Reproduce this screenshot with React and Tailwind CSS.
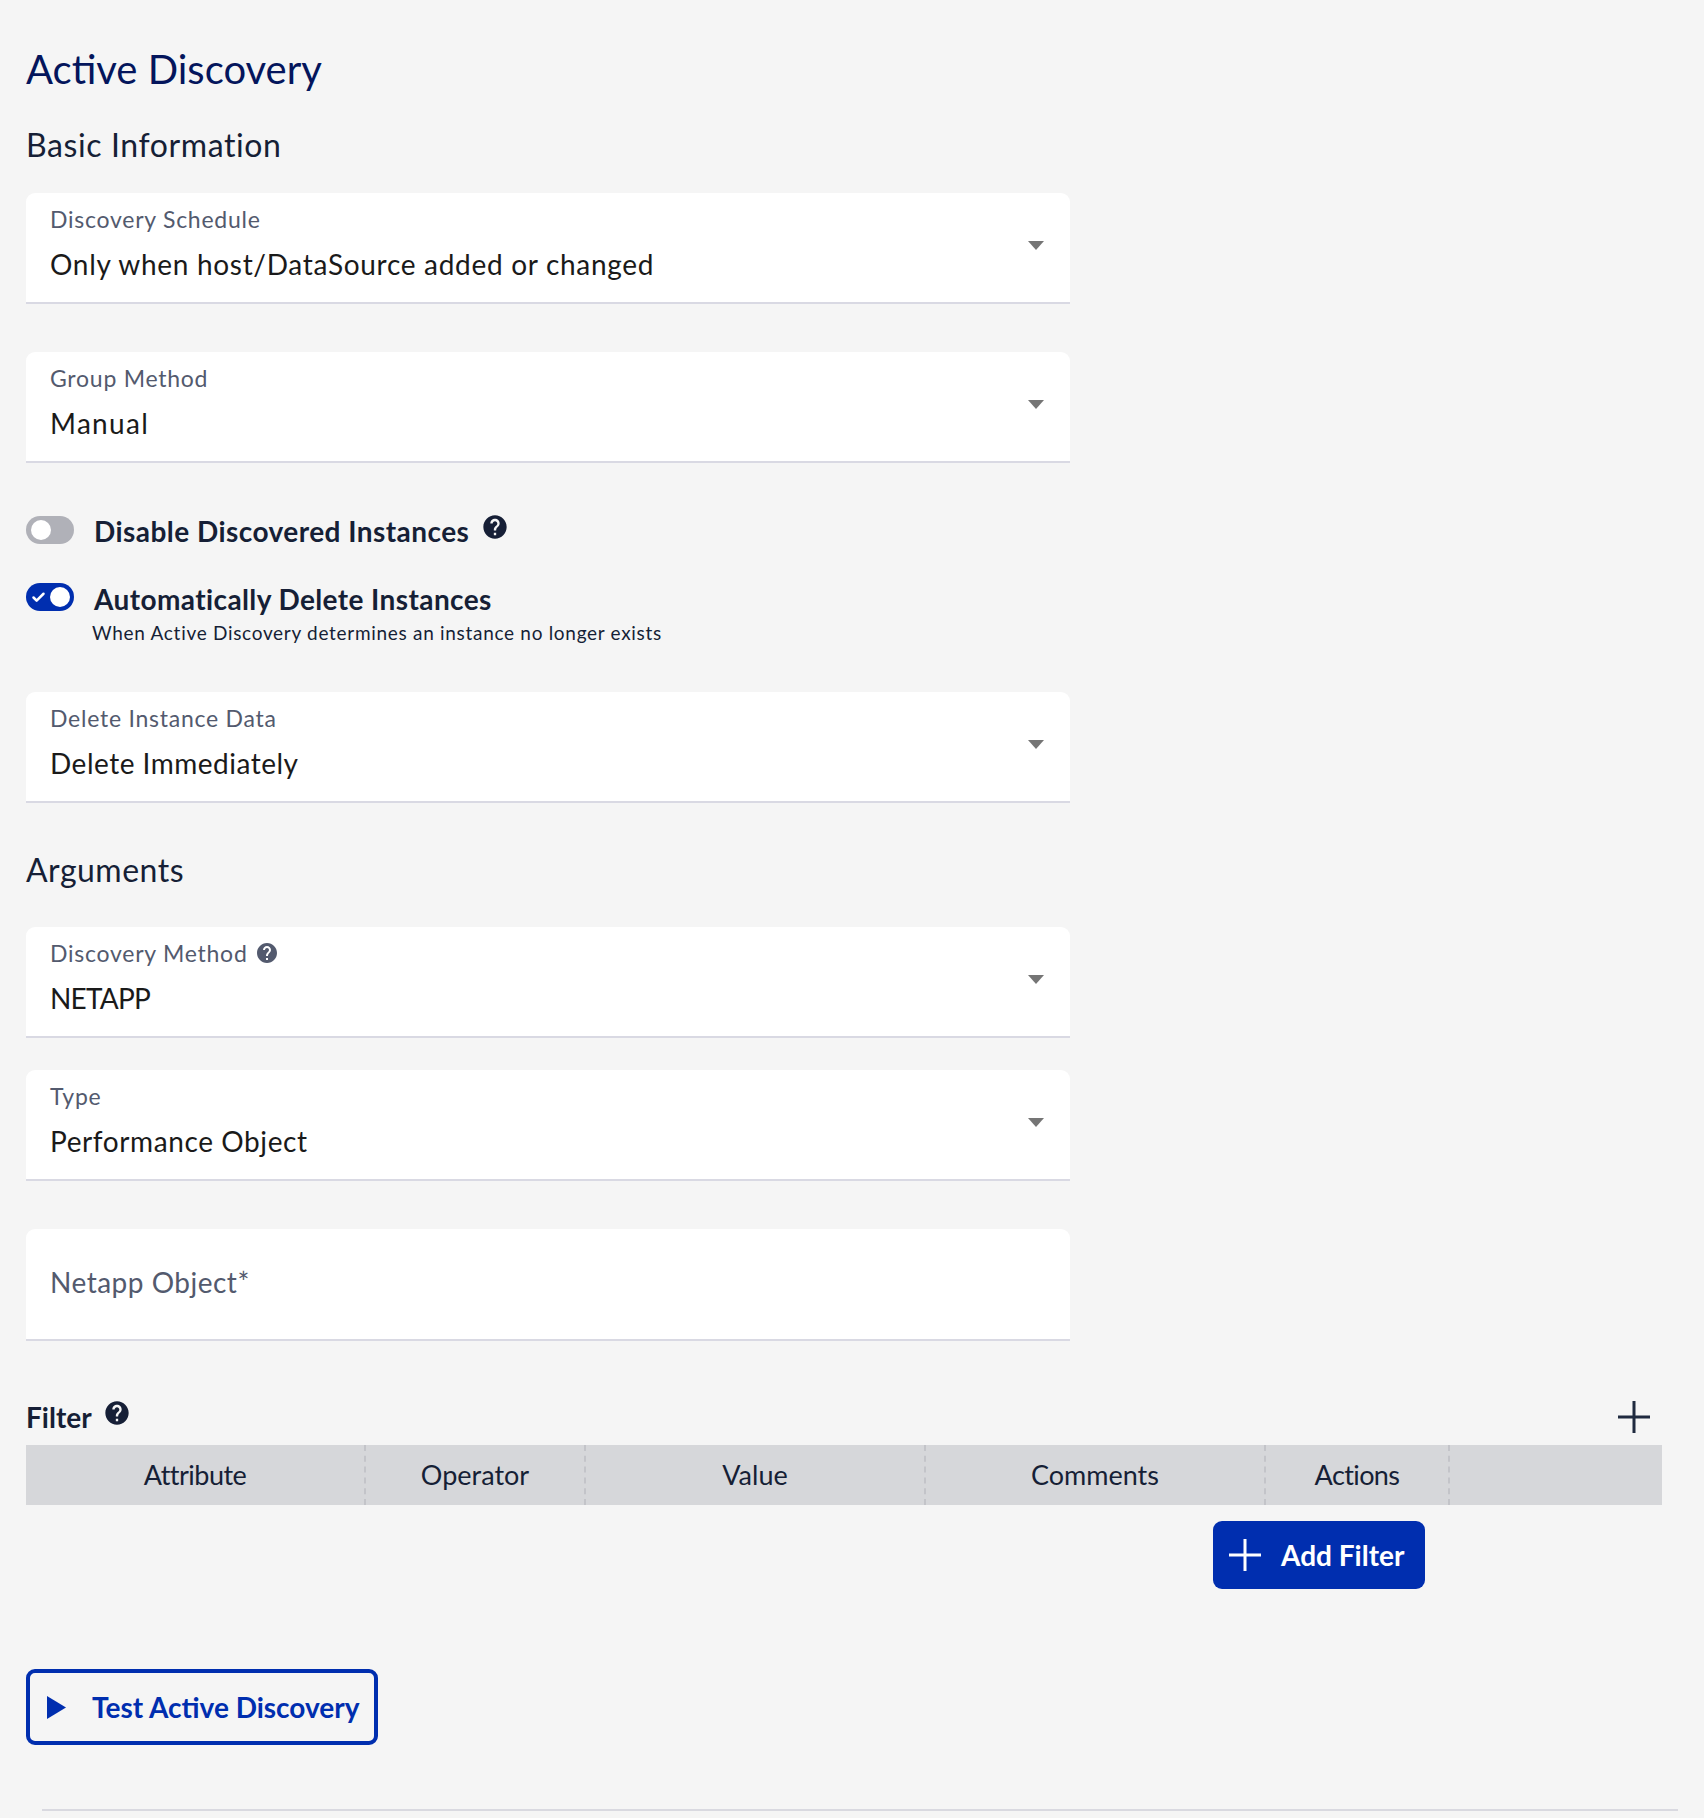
import { Check } from 'lucide-react'
import { MdHelp } from 'react-icons/md'

function Caret() {
  return (
    <svg width="16" height="9" viewBox="0 0 16 9" className="mb-[5px] shrink-0">
      <path d="M0 0H16L8 9Z" fill="#757575" />
    </svg>
  )
}

function PlusIcon({ className = '' }) {
  return (
    <svg width="32" height="32" viewBox="0 0 32 32" className={`shrink-0 ${className}`}>
      <path d="M16 0V32M0 16H32" stroke="currentColor" strokeWidth="3" fill="none" />
    </svg>
  )
}

function SelectField({ label, value, help, valueClass = 'tracking-[0.7px]', className = '' }) {
  return (
    <div className={`flex w-[1044px] items-center justify-between rounded-t-[9px] border-b-2 border-[#d9d9e3] bg-white pl-6 pr-[26px] ${className}`}>
      <div className="pt-[11px] pb-5">
        <div className="flex items-center gap-[7px] text-[23px] leading-[30px] tracking-[0.75px] text-[#535a6e]">
          {label}
          {help && <MdHelp className="text-[24px] text-[#535a6e]" />}
        </div>
        <div className={`mt-3 text-[28px] leading-[36px] text-[#1a1a1a] ${valueClass}`}>{value}</div>
      </div>
      <Caret />
    </div>
  )
}

function Toggle({ on }) {
  return (
    <div className={`mt-[2px] flex h-7 w-12 shrink-0 items-center justify-between rounded-full px-1 ${on ? 'bg-[#002eaf]' : 'bg-[#b0b1b8]'}`}>
      {on ? <Check size={15} strokeWidth={4} className="ml-[1px] text-white" /> : <span className="ml-[1px] h-5 w-5 rounded-full bg-white" />}
      {on && <span className="h-5 w-5 rounded-full bg-white" />}
    </div>
  )
}

const columns = [
  { name: 'Attribute', w: 'w-[340px] tracking-[-0.5px]' },
  { name: 'Operator', w: 'w-[220px]' },
  { name: 'Value', w: 'w-[340px]' },
  { name: 'Comments', w: 'w-[340px]' },
  { name: 'Actions', w: 'w-[184px] tracking-[-0.6px]' },
  { name: '', w: 'flex-1' },
]

export default function App() {
  return (
    <div className="flex min-h-[1818px] flex-col items-start bg-[#f5f5f5] pt-[43px] pl-[26px] font-['Lato',sans-serif]">
      <h1 className="text-[40px] leading-[52px] text-[#04155c]">Active Discovery</h1>
      <h2 className="mt-[30px] text-[32px] leading-[40px] tracking-[0.6px] text-[#161f36]">Basic Information</h2>

      <SelectField className="mt-7" label="Discovery Schedule" value="Only when host/DataSource added or changed" />
      <SelectField className="mt-12" label="Group Method" value="Manual" valueClass="tracking-[1.3px]" />

      <div className="mt-[51px] flex items-start">
        <Toggle />
        <span className="-mt-[1px] ml-5 text-[28px] leading-[36px] font-bold tracking-[0.45px] text-[#161f36]">Disable Discovered Instances</span>
        <MdHelp className="ml-3 -mt-[1px] text-[28px] text-[#161f36]" />
      </div>

      <div className="mt-[32px] flex items-start">
        <Toggle on />
        <div className="ml-5">
          <div className="text-[28px] leading-[36px] font-bold tracking-[0.4px] text-[#161f36]">Automatically Delete Instances</div>
          <div className="mt-[3px] -ml-[2px] text-[19px] leading-[26px] tracking-[0.7px] text-[#161f36]">When Active Discovery determines an instance no longer exists</div>
        </div>
      </div>

      <SelectField className="mt-[46px]" label="Delete Instance Data" value="Delete Immediately" valueClass="tracking-[0.5px]" />

      <h2 className="mt-[47px] text-[32px] leading-[40px] tracking-[0.5px] text-[#161f36]">Arguments</h2>

      <SelectField className="mt-[37px]" label="Discovery Method" value="NETAPP" valueClass="tracking-[-0.8px]" help />
      <SelectField className="mt-8" label="Type" value="Performance Object" valueClass="tracking-[0.6px]" />

      <div className="mt-[48px] flex h-[112px] w-[1044px] items-center rounded-t-[9px] border-b-2 border-[#d9d9e3] bg-white pl-6">
        <span className="mb-1 text-[28px] tracking-[0.5px] text-[#535a6e]">Netapp Object*</span>
      </div>

      <div className="mt-[60px] flex h-8 w-[1636px] items-center justify-between">
        <div className="flex items-center">
          <span className="text-[28px] leading-[32px] font-bold text-[#161f36]">Filter</span>
          <MdHelp className="ml-[11px] -mt-2 text-[28px] text-[#161f36]" />
        </div>
        <PlusIcon className="mr-3 text-[#1f2a3f]" />
      </div>

      <div className="mt-3 flex h-[60px] w-[1636px] bg-[#d6d7da]">
        {columns.map((col) => (
          <div key={col.name} className={`flex items-center justify-center text-[27px] text-[#161f36] ${col.w} ${col.name ? 'border-r-2 border-dashed border-[#c3c4c9]' : ''}`}>
            {col.name}
          </div>
        ))}
      </div>

      <button className="mt-4 ml-[1187px] flex h-[68px] w-[212px] items-center rounded-[9px] bg-[#002eaf] pl-4 text-[28px] font-bold text-white">
        <PlusIcon />
        <span className="ml-5">Add Filter</span>
      </button>

      <button className="mt-20 flex h-[76px] w-[352px] items-center rounded-[9px] border-4 border-[#002eaf] pl-[17px] text-[28px] font-bold text-[#002eaf]">
        <svg width="19" height="23" viewBox="0 0 19 23"><path d="M0 0L19 11.5L0 23Z" fill="#002eaf" /></svg>
        <span className="ml-[26px]">Test Active Discovery</span>
      </button>

      <div className="mt-16 ml-4 h-[2px] w-[1636px] bg-[#d9d9e0]" />
    </div>
  )
}
